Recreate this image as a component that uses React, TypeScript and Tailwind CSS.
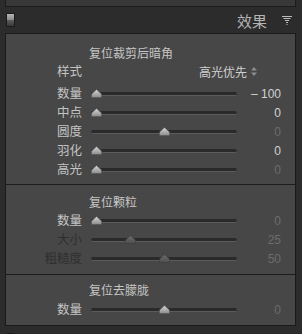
import React from 'react';

const CJK = "font-['Noto_Sans_CJK_SC','Noto_Sans',sans-serif]";

type Row = { label: string; value: string; pos: number; dimLabel?: boolean; dimValue?: boolean; dimThumb?: boolean };

const Thumb: React.FC<{ dim?: boolean }> = ({ dim }) => (
    <svg width="11" height="9" viewBox="0 0 11 9" className="block">
        <defs>
            <linearGradient id={dim ? 'thd' : 'thl'} x1="0" y1="0" x2="0" y2="1">
                <stop offset="0" stopColor={dim ? '#6e6e6e' : '#d6d6d6'} />
                <stop offset="1" stopColor={dim ? '#4e4e4e' : '#8c8c8c'} />
            </linearGradient>
        </defs>
        <polygon points="5.5,0.5 10.5,5 10.5,8.5 0.5,8.5 0.5,5" fill={`url(#${dim ? 'thd' : 'thl'})`} stroke={dim ? '#3a3a3a' : '#555'} strokeWidth="0.6" />
    </svg>
);

const SliderRow: React.FC<{ row: Row }> = ({ row }) => (
    <div className="flex h-[19px] items-center">
        <div className={`w-[76px] text-right text-[12.5px] leading-none ${CJK} ${row.dimLabel ? 'text-[#2f2f2f]' : 'text-[#c4c4c4]'}`}>
            {row.label}
        </div>
        <div className="relative ml-[9px] h-[19px] w-[146px]">
            <div className="absolute left-0 right-0 top-[8px] h-[4px] rounded-full border-b border-[#5c5c5c] bg-[#2a2a2a]" />
            <div className="absolute top-[5px]" style={{ left: `${row.pos * 135}px` }}>
                <Thumb dim={row.dimThumb} />
            </div>
        </div>
        <div
            className={`w-[44px] text-right font-['Liberation_Sans',sans-serif] text-[12px] leading-none ${
                row.dimValue ? 'text-[#6c6c6c]' : 'text-[#d2d2d2]'
            }`}
        >
            {row.value}
        </div>
    </div>
);

const Title: React.FC<{ text: string }> = ({ text }) => (
    <div className={`flex h-[19px] items-center pl-[83px] text-[12px] leading-none text-[#c6c6c6] ${CJK}`}>{text}</div>
);

const vignette: Row[] = [
    { label: '数量', value: '– 100', pos: 0 },
    { label: '中点', value: '0', pos: 0 },
    { label: '圆度', value: '0', pos: 0.5, dimValue: true },
    { label: '羽化', value: '0', pos: 0 },
    { label: '高光', value: '0', pos: 0, dimValue: true },
];

const grain: Row[] = [
    { label: '数量', value: '0', pos: 0, dimValue: true },
    { label: '大小', value: '25', pos: 0.25, dimLabel: true, dimValue: true, dimThumb: true },
    { label: '粗糙度', value: '50', pos: 0.5, dimLabel: true, dimValue: true, dimThumb: true },
];

export default function App() {
    return (
        <div className="relative h-[334px] w-[302px] overflow-hidden bg-[#2c2c2c]">
            {/* bottom of the previous panel */}
            <div className="ml-[5px] h-[7px] w-[291px] border-x border-b border-[#1c1c1c] bg-[#383838]" />

            {/* header */}
            <div className="flex h-[26px] items-center">
                <div className="ml-[6px] flex h-[14px] w-[9px] flex-col overflow-hidden rounded-[1px] border border-[#1a1a1a]">
                    <div className="h-[6px] bg-gradient-to-b from-[#b4b4b4] to-[#8a8a8a]" />
                    <div className="flex-1 bg-gradient-to-b from-[#5e5e5e] to-[#3a3a3a]" />
                </div>
                <div className={`ml-auto text-[15px] leading-none text-[#b4b4b4] ${CJK}`}>效果</div>
                <svg width="10" height="9" viewBox="0 0 10 9" className="ml-[15px] mr-[10px]">
                    <rect x="0" y="0" width="10" height="1" fill="#bdbdbd" />
                    <rect x="1.5" y="2" width="7" height="1" fill="#bdbdbd" />
                    <rect x="3" y="4" width="4" height="1" fill="#bdbdbd" />
                    <rect x="4" y="6" width="2" height="1" fill="#bdbdbd" />
                    <rect x="4.5" y="8" width="1" height="1" fill="#bdbdbd" />
                </svg>
            </div>

            {/* effects panel */}
            <div className="ml-[5px] w-[291px] border-[1.5px] border-[#1a1a1a] bg-[#474747]">
                <div className="pb-[5px] pt-[9px]">
                    <Title text="复位裁剪后暗角" />
                    <div className="flex h-[19px] items-center">
                        <div className={`w-[76px] text-right text-[12.5px] leading-none text-[#c4c4c4] ${CJK}`}>样式</div>
                        <div className={`ml-[117px] flex items-center text-[12px] leading-none text-[#d0d0d0] ${CJK}`}>
                            高光优先
                            <svg width="6" height="9" viewBox="0 0 6 9" className="ml-[4px]">
                                <polygon points="3,0 6,3.5 0,3.5" fill="#8c8c8c" />
                                <polygon points="0,5.5 6,5.5 3,9" fill="#8c8c8c" />
                            </svg>
                        </div>
                    </div>
                    <div className="mt-[3px]">
                        {vignette.map((r) => (
                            <SliderRow key={r.label} row={r} />
                        ))}
                    </div>
                </div>

                <div className="border-t border-[#1c1c1c] pb-[6px] pt-[7px]">
                    <Title text="复位颗粒" />
                    {grain.map((r) => (
                        <SliderRow key={r.label} row={r} />
                    ))}
                </div>

                <div className="border-t border-[#1c1c1c] pb-[6px] pt-[5px]">
                    <Title text="复位去朦胧" />
                    <div className="mt-[1px]">
                        <SliderRow row={{ label: '数量', value: '0', pos: 0.5, dimValue: true }} />
                    </div>
                </div>
            </div>

            {/* top of the next panel */}
            <div className="ml-[7px] mt-[7px] h-[6px] w-[8px] border border-[#1a1a1a] bg-[#a8a8a8]" />
        </div>
    );
}
